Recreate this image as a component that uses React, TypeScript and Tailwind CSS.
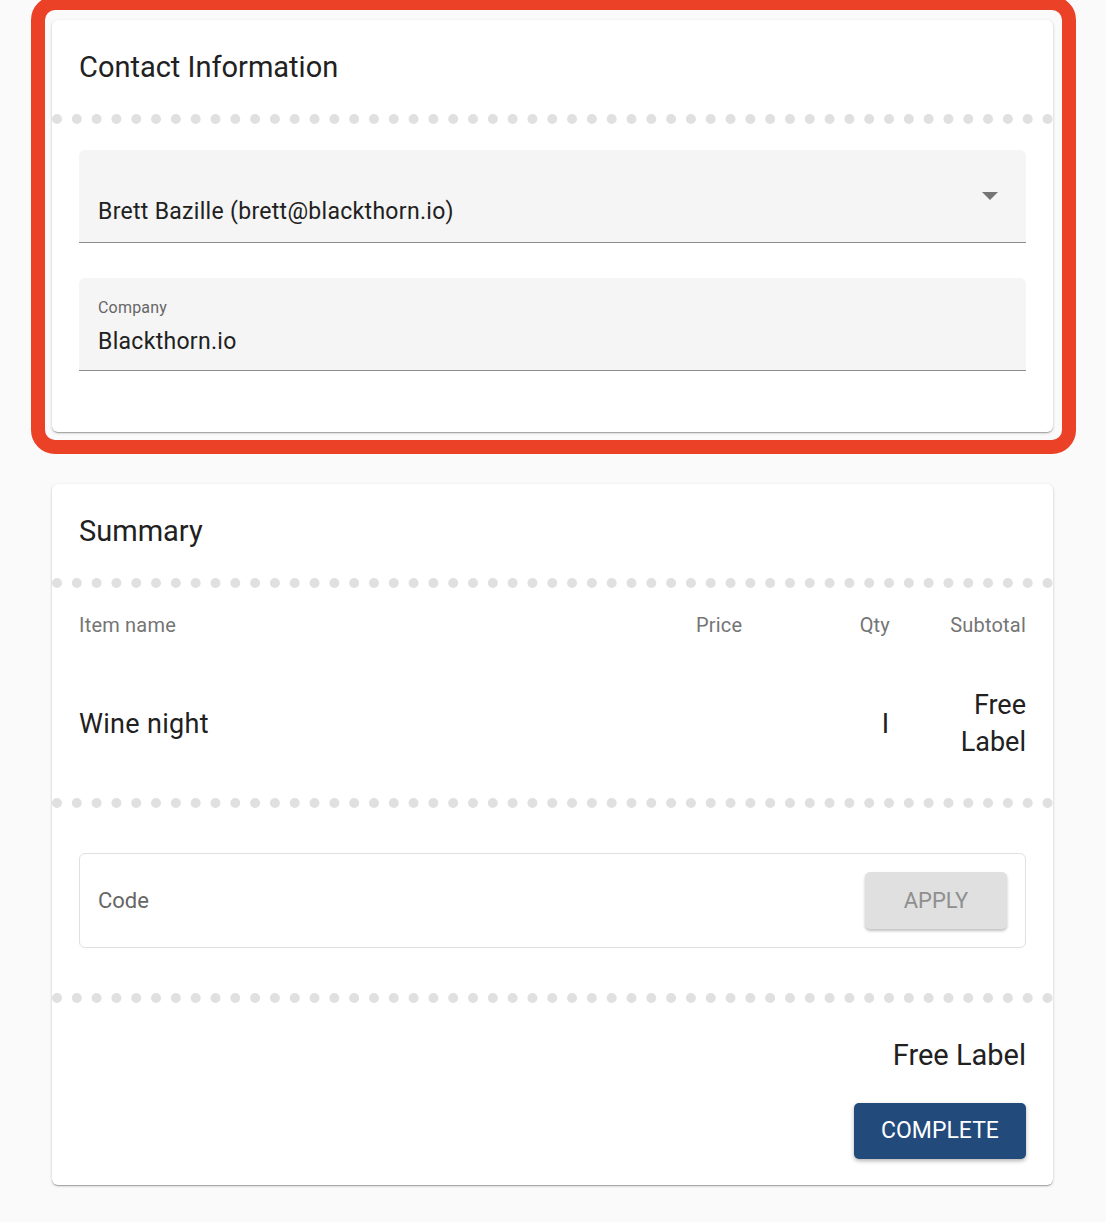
import React from "react";

function Dots() {
  return <div className="h-0 border-t-[10px] border-dotted border-[#e0e0e0]" />;
}

export default function App() {
  return (
    <div className="relative min-h-[1222px] bg-[#fafafa] font-['Roboto',sans-serif] text-[#212121] overflow-hidden">
      <div className="flex flex-col gap-[52px] pl-[52px] pr-[53px] pt-[20px] pb-[38px]">
        {/* Contact card */}
        <div className="bg-white rounded-[6px] shadow-[0_1px_3px_rgba(0,0,0,0.2),0_1px_1px_rgba(0,0,0,0.14),0_2px_1px_-1px_rgba(0,0,0,0.12)]">
          <div className="h-[94px] flex items-center px-[27px]">
            <h2 className="text-[29px] leading-none font-normal">Contact Information</h2>
          </div>
          <Dots />
          <div className="px-[27px] pt-[26px] pb-[61px] flex flex-col gap-[35px]">
            <div className="relative h-[93px] bg-[#f5f5f5] rounded-t-[6px] border-b border-[#8e8e8e] flex items-end pb-[19px] px-[19px]">
              <span className="text-[23px] leading-none tracking-[0.3px]">Brett Bazille (brett@blackthorn.io)</span>
              <svg className="absolute right-[28px] top-[42px]" width="16" height="9" viewBox="0 0 16 9">
                <path d="M0 0 L16 0 L8 8 Z" fill="#757575" />
              </svg>
            </div>
            <div className="h-[93px] bg-[#f5f5f5] rounded-t-[6px] border-b border-[#8e8e8e] flex flex-col px-[19px] pt-[22px]">
              <span className="text-[16px] leading-none text-[#666666] tracking-[0.2px]">Company</span>
              <span className="text-[23px] leading-none mt-[14px] tracking-[0.3px]">Blackthorn.io</span>
            </div>
          </div>
        </div>

        {/* Summary card */}
        <div className="bg-white rounded-[6px] shadow-[0_1px_3px_rgba(0,0,0,0.2),0_1px_1px_rgba(0,0,0,0.14),0_2px_1px_-1px_rgba(0,0,0,0.12)]">
          <div className="h-[94px] flex items-center px-[27px]">
            <h2 className="text-[29px] leading-none font-normal">Summary</h2>
          </div>
          <Dots />
          <div className="px-[27px]">
            <div className="grid grid-cols-[617px_120px_74px_136px] h-[74px] items-center text-[20px] text-[#757575] tracking-[0.2px]">
              <span>Item name</span>
              <span>Price</span>
              <span className="text-right">Qty</span>
              <span className="text-right">Subtotal</span>
            </div>
            <div className="grid grid-cols-[617px_120px_74px_136px] items-center pt-[25px] pb-[37px] text-[27px] leading-[37px]">
              <span className="tracking-[0.3px]">Wine night</span>
              <span></span>
              <span className="text-right pr-[1px]">I</span>
              <span className="text-right pl-[44px]">Free Label</span>
            </div>
          </div>
          <Dots />
          <div className="px-[27px] py-[45px]">
            <div className="h-[95px] border border-[#e0e0e0] rounded-[6px] flex items-center justify-between pl-[18px] pr-[18px]">
              <span className="text-[22px] text-[#666666]">Code</span>
              <button className="w-[142px] h-[57px] bg-[#e0e0e0] rounded-[5px] text-[22px] text-[#8f8f8f] shadow-[0_2px_3px_rgba(0,0,0,0.25)]">
                APPLY
              </button>
            </div>
          </div>
          <Dots />
          <div className="px-[27px] pt-[36px] pb-[26px] flex flex-col items-end">
            <span className="text-[29px] leading-[32px]">Free Label</span>
            <button className="mt-[32px] w-[172px] h-[56px] bg-[#224b7c] rounded-[5px] text-white text-[23px] shadow-[0_2px_4px_rgba(0,0,0,0.3)]">
              COMPLETE
            </button>
          </div>
        </div>
      </div>

      {/* highlight */}
      <div className="absolute left-[31px] top-[-4px] w-[1045px] h-[458px] border-[14px] border-[#eb4127] rounded-[24px] pointer-events-none" />
    </div>
  );
}
